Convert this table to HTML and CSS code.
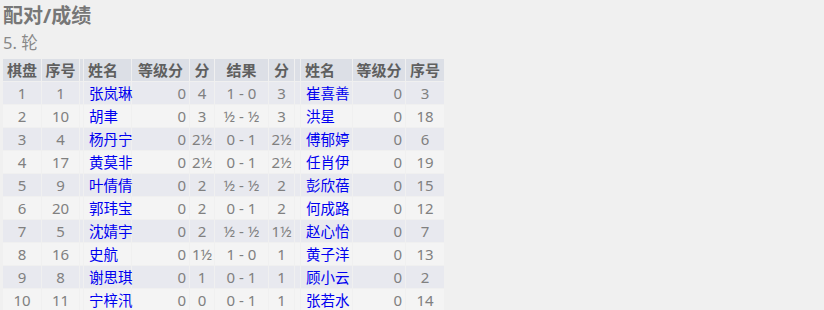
FILE: index.html
```html
<!DOCTYPE html>
<html lang="zh">
<head>
<meta charset="utf-8">
<title>配对/成绩</title>
<link rel="stylesheet" href="styles.css">
</head>
<body>
<h2 class="title">配对/成绩</h2>
<div class="round">5. 轮</div>
<table class="pairings">
  <colgroup>
    <col class="w-board"><col class="w-no"><col class="w-sep"><col class="w-name"><col class="w-elo"><col class="w-pts"><col class="w-res"><col class="w-pts2"><col class="w-sep2"><col class="w-name2"><col class="w-elo2"><col class="w-no2">
  </colgroup>
  <thead>
    <tr><th>棋盘</th><th>序号</th><th></th><th class="l">姓名</th><th>等级分</th><th>分</th><th>结果</th><th>分</th><th></th><th class="l">姓名</th><th>等级分</th><th>序号</th></tr>
  </thead>
  <tbody>
    <tr class="odd"><td>1</td><td>1</td><td></td><td class="name">张岚琳</td><td class="r">0</td><td>4</td><td>1 - 0</td><td>3</td><td></td><td class="name">崔喜善</td><td class="r">0</td><td>3</td></tr>
    <tr class="even"><td>2</td><td>10</td><td></td><td class="name">胡聿</td><td class="r">0</td><td>3</td><td>½ - ½</td><td>3</td><td></td><td class="name">洪星</td><td class="r">0</td><td>18</td></tr>
    <tr class="odd"><td>3</td><td>4</td><td></td><td class="name">杨丹宁</td><td class="r">0</td><td>2½</td><td>0 - 1</td><td>2½</td><td></td><td class="name">傅郁婷</td><td class="r">0</td><td>6</td></tr>
    <tr class="even"><td>4</td><td>17</td><td></td><td class="name">黄莫非</td><td class="r">0</td><td>2½</td><td>0 - 1</td><td>2½</td><td></td><td class="name">任肖伊</td><td class="r">0</td><td>19</td></tr>
    <tr class="odd"><td>5</td><td>9</td><td></td><td class="name">叶倩倩</td><td class="r">0</td><td>2</td><td>½ - ½</td><td>2</td><td></td><td class="name">彭欣蓓</td><td class="r">0</td><td>15</td></tr>
    <tr class="even"><td>6</td><td>20</td><td></td><td class="name">郭玮宝</td><td class="r">0</td><td>2</td><td>0 - 1</td><td>2</td><td></td><td class="name">何成路</td><td class="r">0</td><td>12</td></tr>
    <tr class="odd"><td>7</td><td>5</td><td></td><td class="name">沈婧宇</td><td class="r">0</td><td>2</td><td>½ - ½</td><td>1½</td><td></td><td class="name">赵心怡</td><td class="r">0</td><td>7</td></tr>
    <tr class="even"><td>8</td><td>16</td><td></td><td class="name">史航</td><td class="r">0</td><td>1½</td><td>1 - 0</td><td>1</td><td></td><td class="name">黄子洋</td><td class="r">0</td><td>13</td></tr>
    <tr class="odd"><td>9</td><td>8</td><td></td><td class="name">谢思琪</td><td class="r">0</td><td>1</td><td>0 - 1</td><td>1</td><td></td><td class="name">顾小云</td><td class="r">0</td><td>2</td></tr>
    <tr class="even"><td>10</td><td>11</td><td></td><td class="name">宁梓汛</td><td class="r">0</td><td>0</td><td>0 - 1</td><td>1</td><td></td><td class="name">张若水</td><td class="r">0</td><td>14</td></tr>
  </tbody>
</table>
</body>
</html>
```
FILE: styles.css
```css
html, body {
  margin: 0;
  background: #f0f0f0;
}
body {
  padding: 3px 0 0 2px;
  font-family: "Noto Sans", "Noto Sans CJK SC", sans-serif;
  color: #808080;
}
.title {
  margin: 0 0 0 1px;
  font-size: 20px;
  line-height: 26px;
  font-weight: bold;
  color: #777777;
}
.round {
  margin: 2px 0 0 1px;
  font-size: 16.5px;
  line-height: 24px;
  color: #888888;
}
.pairings {
  margin-top: 3px;
  border-collapse: separate;
  border-spacing: 1px;
  table-layout: fixed;
  width: 443px;
  font-size: 15px;
}
.w-board { width: 38px; }
.w-no { width: 37px; }
.w-sep { width: 3px; }
.w-name { width: 47px; }
.w-elo { width: 57px; }
.w-pts { width: 24px; }
.w-res { width: 53px; }
.w-pts2 { width: 25px; }
.w-sep2 { width: 5px; }
.w-name2 { width: 51px; }
.w-elo2 { width: 52px; }
.w-no2 { width: 38px; }

.pairings th,
.pairings td {
  height: 22px;
  padding: 0 2px;
  text-align: center;
  white-space: nowrap;
  overflow: visible;
  line-height: 22px;
}
.pairings th:nth-child(3), .pairings td:nth-child(3),
.pairings th:nth-child(9), .pairings td:nth-child(9) {
  padding: 0;
}
.pairings th {
  background: #dcdfe6;
  color: #5f5f5f;
  font-weight: bold;
}
.pairings th.l { text-align: left; padding-left: 4px; }
.pairings td.name {
  text-align: left;
  color: #0000f0;
  font-size: 14.5px;
  padding-left: 5px;
  padding-right: 0;
}
.pairings td.r { text-align: right; padding-right: 3px; }
.pairings tr.odd td { background: #e8e9ef; }
.pairings tr.even td { background: #f4f4f4; }
```
